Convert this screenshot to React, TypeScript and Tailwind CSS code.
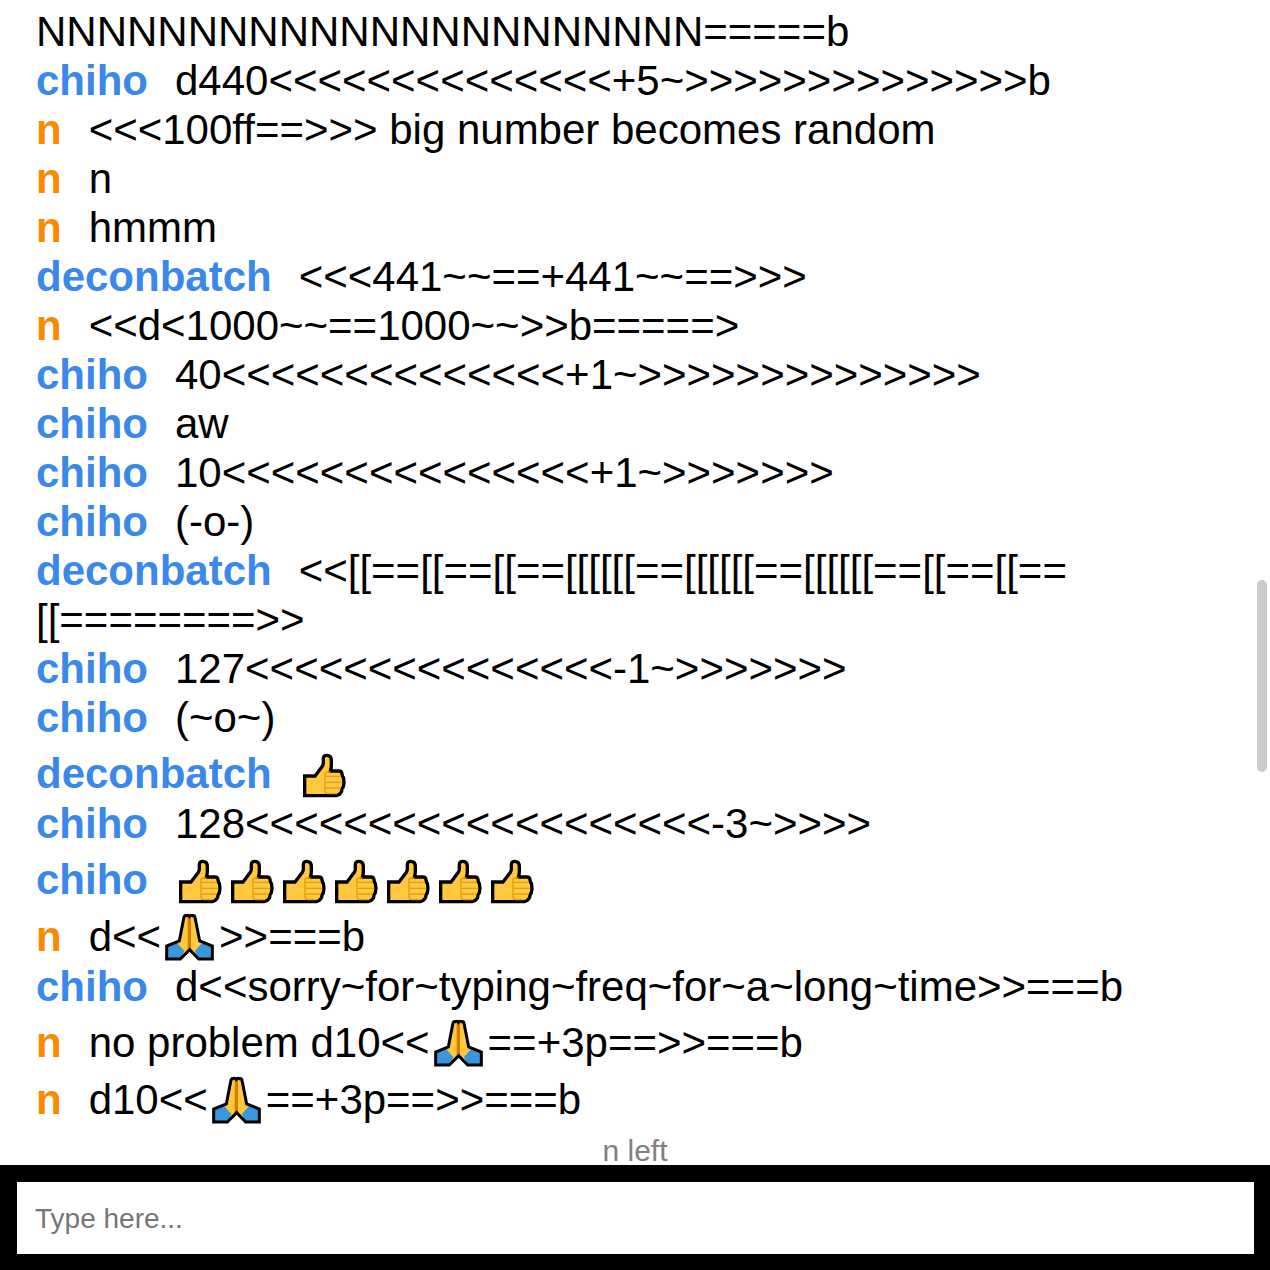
import type { ReactNode } from "react";

function ThumbsUp() {
  return (
    <svg
      role="img"
      aria-label="thumbs up"
      viewBox="30 6 156 171"
      className="inline-block h-[57px] w-[52px] align-[-11px]"
    >
      <path
        d="M47 108H78L100 79Q103 75 103 70V55Q103 46 114 46Q127 46 127 62V77Q127 85 124 93H149Q158 93 159 101L160 108Q165 113 164 120Q166 128 164 134Q164 141 159 146Q159 154 155 159Q150 166 142 167H47Z"
        fill="#ffc83d"
        stroke="#000"
        strokeWidth="10"
        strokeLinejoin="miter"
      />
      <path
        d="M124 96H114Q108 96 108 103V151Q108 161 117 161H142M109 109H156M109 127H159M109 144H156"
        fill="none"
        stroke="#e19d1c"
        strokeWidth="4"
      />
    </svg>
  );
}

function FoldedHands() {
  return (
    <svg
      role="img"
      aria-label="folded hands"
      viewBox="33 15 174 171"
      className="inline-block h-[57px] w-[58px] align-[-11px]"
    >
      <path
        d="M102 51Q104 46 109 47Q115 44 118 49Q122 44 127 47Q134 46 135 52L149 123L187 138V177H146L119 150L91 177H50V138L88 123Z"
        fill="#ffc83d"
      />
      <path d="M50 138L79 127L103 153L91 177H50ZM187 138L158 127L135 153L146 177H187Z" fill="#3a96dd" />
      <path d="M118 50V150" stroke="#d67d00" strokeWidth="10" />
      <path
        d="M102 51Q104 46 109 47Q115 44 118 49Q122 44 127 47Q134 46 135 52L149 123L187 138V177H146L119 149L91 177H50V138L88 123Z"
        fill="none"
        stroke="#000"
        strokeWidth="9"
      />
    </svg>
  );
}

type Message = { user?: "chiho" | "n" | "deconbatch"; body: ReactNode };

const messages: Message[] = [
  { body: "NNNNNNNNNNNNNNNNNNNNNN=====b" },
  { user: "chiho", body: "d440<<<<<<<<<<<<<<+5~>>>>>>>>>>>>>>b" },
  { user: "n", body: "<<<100ff==>>> big number becomes random" },
  { user: "n", body: "n" },
  { user: "n", body: "hmmm" },
  { user: "deconbatch", body: "<<<441~~==+441~~==>>>" },
  { user: "n", body: "<<d<1000~~==1000~~>>b=====>" },
  { user: "chiho", body: "40<<<<<<<<<<<<<<+1~>>>>>>>>>>>>>>" },
  { user: "chiho", body: "aw" },
  { user: "chiho", body: "10<<<<<<<<<<<<<<<+1~>>>>>>>" },
  { user: "chiho", body: "(-o-)" },
  { user: "deconbatch", body: "<<[[==[[==[[==[[[[[[==[[[[[[==[[[[[[==[[==[[==[[========>>" },
  { user: "chiho", body: "127<<<<<<<<<<<<<<<-1~>>>>>>>" },
  { user: "chiho", body: "(~o~)" },
  { user: "deconbatch", body: <ThumbsUp /> },
  { user: "chiho", body: "128<<<<<<<<<<<<<<<<<<<-3~>>>>" },
  {
    user: "chiho",
    body: (
      <>
        <ThumbsUp />
        <ThumbsUp />
        <ThumbsUp />
        <ThumbsUp />
        <ThumbsUp />
        <ThumbsUp />
        <ThumbsUp />
      </>
    ),
  },
  { user: "n", body: <>d&lt;&lt;<FoldedHands />&gt;&gt;===b</> },
  { user: "chiho", body: "d<<sorry~for~typing~freq~for~a~long~time>>===b" },
  { user: "n", body: <>no problem d10&lt;&lt;<FoldedHands />==+3p==&gt;&gt;===b</> },
  { user: "n", body: <>d10&lt;&lt;<FoldedHands />==+3p==&gt;&gt;===b</> },
];

const userColors = {
  chiho: "text-[#3b88eb]",
  deconbatch: "text-[#3b88eb]",
  n: "text-[#f78b00]",
};

export default function App() {
  return (
    <div className="flex h-screen flex-col bg-white font-['Liberation_Sans',Arial,sans-serif] text-black">
      <main className="relative flex min-h-0 flex-1 flex-col justify-end overflow-hidden">
        <ul className="px-9 text-[42px] leading-[49px]">
          {messages.map((message, i) => (
            <li key={i}>
              {message.user && (
                <span className={`mr-[27px] font-bold ${userColors[message.user]}`}>{message.user}</span>
              )}
              {message.body}
            </li>
          ))}
        </ul>
        <p className="pt-3 text-center text-[30px] leading-7 text-[#808080]">n left</p>
        <div className="absolute top-[580px] right-[3px] h-48 w-2.5 rounded-full bg-[#cbcbcb]" />
      </main>
      <footer className="bg-black pt-[17px] pr-4 pb-4 pl-[17px]">
        <input
          type="text"
          aria-label="Message"
          placeholder="Type here..."
          className="block w-full bg-white px-[18px] pt-[21px] pb-[19px] text-[28px] leading-8 outline-none placeholder:text-[#757575]"
        />
      </footer>
    </div>
  );
}
